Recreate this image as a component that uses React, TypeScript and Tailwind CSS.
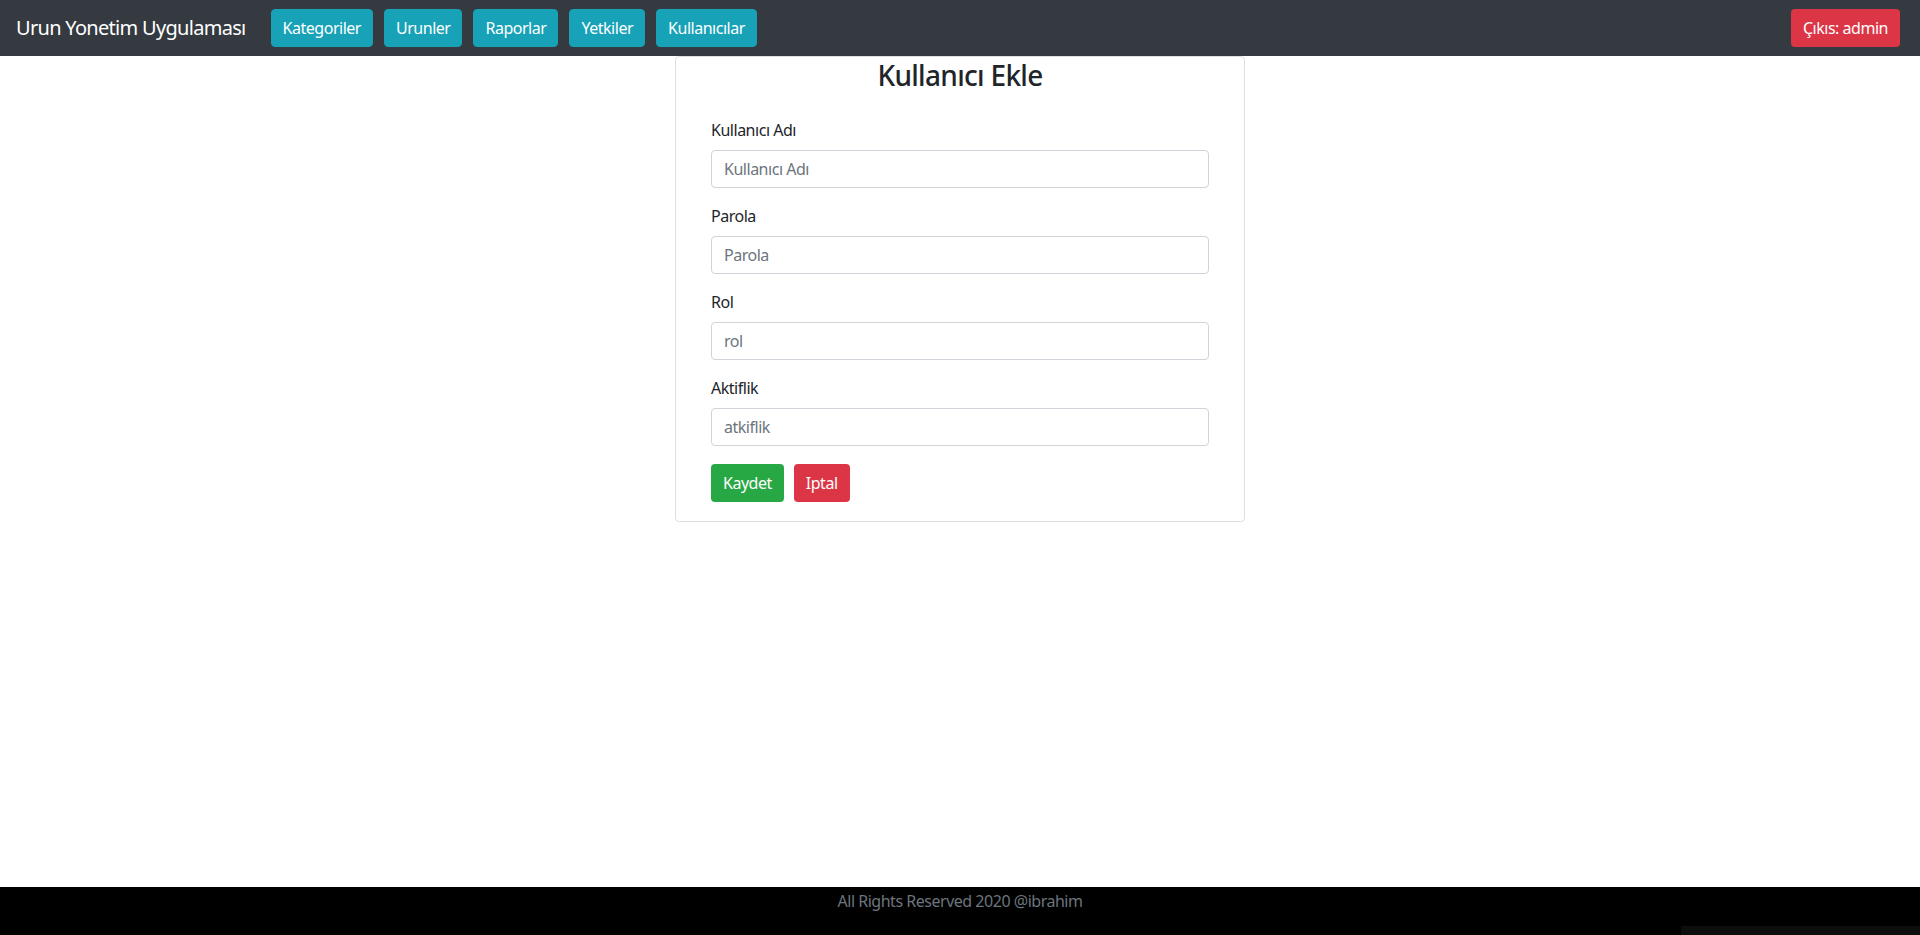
import React from "react";

const font = { fontFamily: '"Segoe UI", "Noto Sans", "Open Sans", sans-serif' };

function NavBtn({ children }: { children: React.ReactNode }) {
  return (
    <button className="h-[38px] px-[11px] rounded-[4px] bg-[#17a2b8] text-white text-[16px] leading-6 border border-[#17a2b8]">
      {children}
    </button>
  );
}

function Field({ label, placeholder }: { label: string; placeholder: string }) {
  return (
    <div className="mb-4">
      <label className="block text-[16px] leading-6 mb-2 text-[#212529]">{label}</label>
      <input
        className="block w-full h-[38px] px-3 text-[16px] tracking-[-0.03em] border border-[#ced4da] rounded-[4px] text-[#495057] placeholder:text-[#6c757d] outline-none"
        placeholder={placeholder}
      />
    </div>
  );
}

export default function App() {
  return (
    <div className="min-h-[935px] h-[935px] flex flex-col bg-white relative tracking-[-0.03em]" style={font}>
      <nav className="h-[56px] bg-[#343a40] flex items-center px-4 shrink-0">
        <span className="text-white text-[20px] leading-[30px] mr-[25px] tracking-[-0.035em]">Urun Yonetim Uygulaması</span>
        <div className="flex gap-[11px]">
          <NavBtn>Kategoriler</NavBtn>
          <NavBtn>Urunler</NavBtn>
          <NavBtn>Raporlar</NavBtn>
          <NavBtn>Yetkiler</NavBtn>
          <NavBtn>Kullanıcılar</NavBtn>
        </div>
        <button className="ml-auto mr-[4px] h-[38px] px-3 rounded-[4px] bg-[#dc3545] text-white text-[16px] leading-6">
          Çıkıs: admin
        </button>
      </nav>
      <main className="flex-1">
        <div className="w-[570px] mx-auto border border-[#dfdfdf] rounded-[4px] px-[35px] pt-[1px] pb-[19px]">
          <h3 className="text-center text-[28px] leading-[34px] font-medium text-[#212529] mb-[26px] tracking-[-0.025em]">Kullanıcı Ekle</h3>
          <Field label="Kullanıcı Adı" placeholder="Kullanıcı Adı" />
          <Field label="Parola" placeholder="Parola" />
          <Field label="Rol" placeholder="rol" />
          <Field label="Aktiflik" placeholder="atkiflik" />
          <div className="flex gap-[10px] pt-[2px]">
            <button className="h-[38px] px-3 rounded-[4px] bg-[#28a745] text-white text-[16px]">Kaydet</button>
            <button className="h-[38px] px-3 rounded-[4px] bg-[#dc3545] text-white text-[16px]">Iptal</button>
          </div>
        </div>
      </main>
      <footer className="h-[48px] bg-black text-center text-[#6c757d] text-[16px] leading-6 pt-[2px] shrink-0">
        All Rights Reserved 2020 @ibrahim
      </footer>
      <div className="absolute right-0 bottom-0 w-[239px] h-[9px] bg-[#0d0d0d]" />
    </div>
  );
}
